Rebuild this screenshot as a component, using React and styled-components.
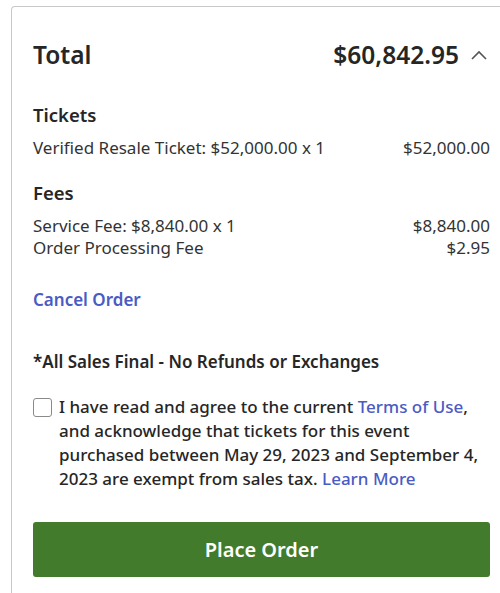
import styled, { createGlobalStyle } from "styled-components";

const GlobalStyle = createGlobalStyle`
  body {
    margin: 0;
    background: #fff;
    font-family: "Noto Sans", "Lato", sans-serif;
    color: #262626;
  }
`;

const Page = styled.div`
  padding: 6px 0 0 11px;
  width: 500px;
  height: 593px;
  box-sizing: border-box;
  overflow: hidden;
`;

const Card = styled.section`
  border: 1px solid #c8c8c8;
  border-right: none;
  border-bottom: none;
  border-radius: 4px 0 0 0;
  padding: 33px 10px 20px 21px;
  height: 620px;
  box-sizing: border-box;
`;

const TotalRow = styled.div`
  display: flex;
  align-items: center;
  justify-content: space-between;
  height: 30px;
  line-height: 30px;
`;

const TotalLabel = styled.h2`
  margin: 0;
  font-size: 24.5px;
  font-weight: 600;
`;

const TotalRight = styled.div`
  display: flex;
  align-items: center;
  gap: 12px;
  padding-right: 3px;
`;

const TotalAmount = styled.span`
  font-size: 24.5px;
  font-weight: 600;
`;

const Section = styled.div`
  margin-top: ${({ $top }) => $top}px;
`;

const SectionTitle = styled.h3`
  margin: 0 0 10px;
  font-size: 18.5px;
  font-weight: 600;
  line-height: 24px;
`;

const Line = styled.div`
  display: flex;
  justify-content: space-between;
  font-size: 17px;
  line-height: 22px;
  color: #333;
`;

const LinkButton = styled.a`
  display: block;
  width: max-content;
  margin-top: 30px;
  font-size: 17px;
  line-height: 22px;
  font-weight: 600;
  color: #4a5bc4;
  text-decoration: none;
  cursor: pointer;
`;

const Notice = styled.p`
  margin: 39px 0 0;
  font-size: 17px;
  font-weight: 600;
  line-height: 24px;
`;

const AgreeRow = styled.label`
  display: flex;
  gap: 7px;
  margin-top: 21px;
  font-size: 17px;
  font-weight: 500;
  line-height: 24px;
`;

const Box = styled.input`
  appearance: none;
  flex: none;
  width: 19px;
  height: 19px;
  margin: 3px 0 0;
  border: 1px solid #8a8a8a;
  border-radius: 3px;
  background: #fff;
`;

const InlineLink = styled.a`
  color: #4a5bc4;
  text-decoration: none;
`;

const PlaceButton = styled.button`
  display: block;
  width: 100%;
  height: 55px;
  margin-top: 31px;
  border: none;
  border-radius: 3px;
  background: #427b2b;
  color: #fff;
  font-family: inherit;
  font-size: 20px;
  font-weight: 600;
  cursor: pointer;
`;

const Chevron = () => (
  <svg width="16" height="10" viewBox="0 0 16 10" fill="none">
    <path d="M1 9 L8 2 L15 9" stroke="#555" strokeWidth="1.6" />
  </svg>
);

export default function App() {
  return (
    <>
      <GlobalStyle />
      <Page>
        <Card>
          <TotalRow>
            <TotalLabel>Total</TotalLabel>
            <TotalRight>
              <TotalAmount>$60,842.95</TotalAmount>
              <Chevron />
            </TotalRight>
          </TotalRow>
          <Section $top={33}>
            <SectionTitle>Tickets</SectionTitle>
            <Line>
              <span>Verified Resale Ticket: $52,000.00 x 1</span>
              <span>$52,000.00</span>
            </Line>
          </Section>
          <Section $top={22}>
            <SectionTitle>Fees</SectionTitle>
            <Line>
              <span>Service Fee: $8,840.00 x 1</span>
              <span>$8,840.00</span>
            </Line>
            <Line>
              <span>Order Processing Fee</span>
              <span>$2.95</span>
            </Line>
          </Section>
          <LinkButton>Cancel Order</LinkButton>
          <Notice>*All Sales Final - No Refunds or Exchanges</Notice>
          <AgreeRow>
            <Box type="checkbox" />
            <span>
              I have read and agree to the current{" "}
              <InlineLink>Terms of Use</InlineLink>, and acknowledge that
              tickets for this event purchased between May 29, 2023 and
              September 4, 2023 are exempt from sales tax.{" "}
              <InlineLink>Learn More</InlineLink>
            </span>
          </AgreeRow>
          <PlaceButton>Place Order</PlaceButton>
        </Card>
      </Page>
    </>
  );
}
